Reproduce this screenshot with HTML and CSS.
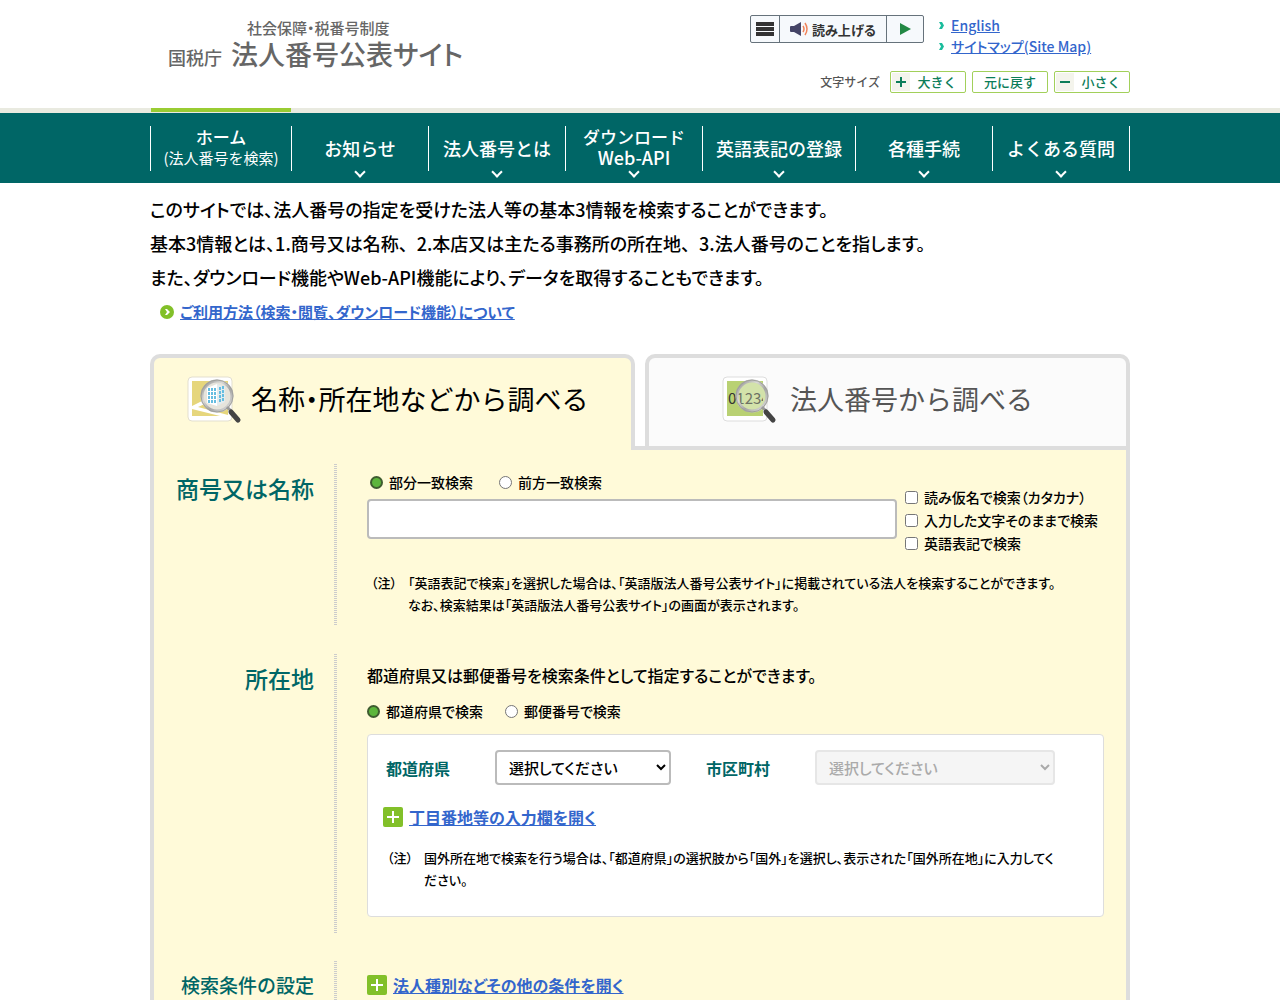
FILE: index.html
```html
<!DOCTYPE html>
<html lang="ja">
<head>
<meta charset="utf-8">
<meta name="viewport" content="width=device-width, initial-scale=1">
<title>国税庁法人番号公表サイト</title>
<link rel="stylesheet" href="styles.css">
</head>
<body>
<header class="site-header">
  <div class="container header-inner">
    <a class="logo" href="#">
      <span class="logo-sub">社会保障<span class="tight">・</span>税番号制度</span>
      <span class="logo-main"><span class="logo-agency">国税庁</span><span class="logo-title">法人番号公表サイト</span></span>
    </a>
    <div class="header-tools">
      <div class="tools-top">
        <div class="reader">
          <button type="button" class="reader-menu" aria-label="メニュー">
            <svg width="18" height="14" viewBox="0 0 18 14"><path d="M0 0h18v4H0zM0 5h18v4H0zM0 10h18v4H0z" fill="#333"/></svg>
          </button>
          <button type="button" class="reader-speak">
            <svg width="19" height="14" viewBox="0 0 19 14"><path d="M0 5q0-1 1-1h3l7-4v14l-7-4H1q-1 0-1-1z" fill="#446"/><path d="M13 4q2 3 0 6M15 1q4 6 0 12" fill="none" stroke="#f0845a" stroke-width="1.500"/></svg>
            読み上げる
          </button>
          <button type="button" class="reader-play" aria-label="再生">
            <svg width="11" height="12" viewBox="0 0 11 12"><path d="M0 0l11 6-11 6z" fill="#228844"/></svg>
          </button>
        </div>
        <ul class="sub-links">
          <li><svg width="5" height="7" viewBox="0 0 5 7"><path d="M0 0h3l2 3.500-2 3.500H0l2-3.500z" fill="#1abc9c"/></svg><a href="#">English</a></li>
          <li><svg width="5" height="7" viewBox="0 0 5 7"><path d="M0 0h3l2 3.500-2 3.500H0l2-3.500z" fill="#1abc9c"/></svg><a href="#">サイトマップ(Site Map)</a></li>
        </ul>
      </div>
      <div class="font-size">
        <span class="font-size-label">文字サイズ</span>
        <button type="button" class="size-btn"><span class="size-sign"><svg width="10" height="10" viewBox="0 0 10 10"><path d="M0 4h4V0h2v4h4v2H6v4H4V6H0z" fill="#0c7d59"/></svg></span><span class="size-text">大きく</span></button>
        <button type="button" class="size-btn"><span class="size-text">元に戻す</span></button>
        <button type="button" class="size-btn"><span class="size-sign"><svg width="10" height="10" viewBox="0 0 10 10"><path d="M0 4h10v2H0z" fill="#0c7d59"/></svg></span><span class="size-text">小さく</span></button>
      </div>
    </div>
  </div>
</header>
<nav class="global-nav">
  <ul class="container nav-list">
    <li class="current stacked"><a href="#"><span class="nav-two">ホーム</span><span class="nav-small">(法人番号を検索)</span></a></li>
    <li class="has-menu"><a href="#">お知らせ</a></li>
    <li class="has-menu"><a href="#">法人番号とは</a></li>
    <li class="has-menu stacked"><a href="#"><span class="nav-two">ダウンロード</span><span>Web-API</span></a></li>
    <li class="has-menu"><a href="#">英語表記の登録</a></li>
    <li class="has-menu"><a href="#">各種手続</a></li>
    <li class="has-menu"><a href="#">よくある質問</a></li>
  </ul>
</nav>
<main class="container">
  <div class="intro">
    <p>このサイトでは、法人番号の指定を受けた法人等の基本3情報を検索することができます。</p>
    <p>基本3情報とは、1.商号又は名称<span class="wide">、</span>2.本店又は主たる事務所の所在地<span class="wide">、</span>3.法人番号のことを指します。</p>
    <p>また、ダウンロード機能やWeb-API機能により、データを取得することもできます。</p>
    <div class="guide">
      <svg width="14" height="14" viewBox="0 0 14 14"><circle cx="7" cy="7" r="7" fill="#82c029"/><path d="M5 4h2l3 3-3 3H5l2-3z" fill="#fff"/></svg>
      <a href="#">ご利用方法（検索・閲覧、ダウンロード機能）について</a>
    </div>
  </div>
  <div class="tabs">
    <a class="tab tab-on" href="#">
      <svg width="56" height="50" viewBox="0 0 56 50">
        <defs>
          <linearGradient id="ring" x1="0" y1="0" x2="1" y2="1"><stop offset="0" stop-color="#8c8c8a"/><stop offset=".35" stop-color="#d8d8d6"/><stop offset=".6" stop-color="#a5a5a5"/><stop offset="1" stop-color="#e6e6e6"/></linearGradient>
          <clipPath id="card"><path d="M5 6h36v35H5z"/></clipPath>
        </defs>
        <rect x="1" y="2" width="44" height="44" rx="4" fill="#fff" stroke="#e3dfcf"/>
        <path d="M5 6h36v35H5z" fill="#e6d67c"/>
        <path d="M5 31l14-7 3 3-11 5 30 8v3L5 34z" fill="#fff"/>
        <circle cx="30" cy="21" r="15" fill="#e6e4dc"/>
        <path d="M20 13l10-4v22l-10-3z" fill="#fff"/><path d="M30 9l8 3v15l-8 4z" fill="#e4ecee"/>
        <path d="M22 13v15M25 13v15M28 13v15" stroke="#66bde0" stroke-width="2" stroke-dasharray="3 1" fill="none"/>
        <path d="M33 12v16M36 11v16" stroke="#66bde0" stroke-width="2" stroke-dasharray="3 1" fill="none"/>
        <circle cx="30" cy="21" r="15" fill="none" stroke="url(#ring)" stroke-width="3"/>
        <circle cx="30" cy="21" r="16" fill="none" stroke="#a0a09c"/>
        <path d="M40 32l4 4" stroke="#999" stroke-width="3"/><path d="M44 37l7 8" stroke="#444" stroke-width="5" stroke-linecap="round"/>
      </svg>
      <span>名称<span class="tight">・</span>所在地などから調べる</span>
    </a>
    <a class="tab tab-off" href="#">
      <svg width="56" height="50" viewBox="0 0 56 50">
        <rect x="1" y="2" width="44" height="44" rx="4" fill="#fff" stroke="#ddd"/>
        <path d="M5 6h36v35H5z" fill="#b9d173"/>
        <circle cx="30" cy="21" r="15" fill="#cfe09e"/>
        <text x="6" y="29" font-size="15" class="icon-digits" clip-path="url(#card)">01234</text>
        <circle cx="30" cy="21" r="15" fill="#dbe6bf" fill-opacity=".35" stroke="url(#ring)" stroke-width="3"/>
        <circle cx="30" cy="21" r="16" fill="none" stroke="#a0a09c"/>
        <path d="M40 32l4 4" stroke="#999" stroke-width="3"/><path d="M44 37l7 8" stroke="#444" stroke-width="5" stroke-linecap="round"/>
      </svg>
      <span>法人番号から調べる</span>
    </a>
  </div>
  <form class="panel">
    <section class="row">
      <h2>商号又は名称</h2>
      <div class="row-body name-body">
        <div class="name-grid">
          <div class="name-left">
            <div class="radios radios-name">
              <label><input type="radio" name="match" checked>部分一致検索</label>
              <label><input type="radio" name="match">前方一致検索</label>
            </div>
            <input class="text-box" type="text" aria-label="商号又は名称">
          </div>
          <div class="checks">
            <label><input type="checkbox">読み仮名で検索（カタカナ）</label>
            <label><input type="checkbox">入力した文字そのままで検索</label>
            <label><input type="checkbox">英語表記で検索</label>
          </div>
        </div>
        <div class="note"><span class="note-mark">（注）</span><p>「英語表記で検索」を選択した場合は、「英語版法人番号公表サイト」に掲載されている法人を検索することができます。<br>なお、検索結果は「英語版法人番号公表サイト」の画面が表示されます。</p></div>
      </div>
    </section>
    <section class="row">
      <h2>所在地</h2>
      <div class="row-body place-body">
        <p class="lead">都道府県又は郵便番号を検索条件として指定することができます。</p>
        <div class="radios radios-place">
          <label><input type="radio" name="place" checked>都道府県で検索</label>
          <label><input type="radio" name="place">郵便番号で検索</label>
        </div>
        <div class="box">
          <div class="selects">
            <label for="pref">都道府県</label>
            <select id="pref"><option>選択してください</option></select>
            <label for="city">市区町村</label>
            <select id="city" disabled><option>選択してください</option></select>
          </div>
          <div class="expand">
            <svg width="20" height="20" viewBox="0 0 20 20"><rect width="20" height="20" rx="2" fill="#82c029"/><path d="M4 9h5V4h2v5h5v2h-5v5H9v-5H4z" fill="#fff"/></svg>
            <a href="#">丁目番地等の入力欄を開く</a>
          </div>
          <div class="note"><span class="note-mark">（注）</span><p>国外所在地で検索を行う場合は、「都道府県」の選択肢から「国外」を選択し、表示された「国外所在地」に入力してく<br>ださい。</p></div>
        </div>
      </div>
    </section>
    <section class="row">
      <h2 class="long">検索条件の設定</h2>
      <div class="row-body more-body">
        <div class="expand">
          <svg width="20" height="20" viewBox="0 0 20 20"><rect width="20" height="20" rx="2" fill="#82c029"/><path d="M4 9h5V4h2v5h5v2h-5v5H9v-5H4z" fill="#fff"/></svg>
          <a href="#">法人種別などその他の条件を開く</a>
        </div>
      </div>
    </section>
  </form>
</main>
</body>
</html>
```
FILE: styles.css
```css
* { box-sizing: border-box; }
body {
  margin: 0;
  background: #fff;
  color: #000;
  font-family: "Noto Sans CJK JP", "Noto Sans", sans-serif;
  font-size: 14px;
  font-weight: 500;
  font-feature-settings: "palt";
}
ul { margin: 0; padding: 0; list-style: none; }
p, h2 { margin: 0; }
a { color: #3366cc; }
svg { display: block; flex: none; }
button, input, select { font: inherit; font-feature-settings: inherit; margin: 0; }
.container { width: 100%; max-width: 980px; margin: 0 auto; }
.tight { font-feature-settings: "palt"; }
.wide { font-feature-settings: normal; }

/* header */
.site-header { border-bottom: 5px solid #e9eae0; }
.header-inner { display: flex; justify-content: space-between; min-height: 108px; }
.logo { padding: 18px 0 0 18px; color: #666; text-decoration: none; }
.logo-sub { display: block; padding-left: 79px; font-size: 15px; line-height: 20px; font-feature-settings: normal; }
.logo-main { display: flex; align-items: baseline; gap: 9px; line-height: 32px; }
.logo-agency { font-size: 18px; }
.logo-title { font-size: 27px; }
.header-tools { flex: 0 0 380px; padding-top: 15px; }
.tools-top { display: flex; gap: 15px; }
.reader { display: flex; height: 28px; border: 1px solid #66727b; border-radius: 2px; background: #f6f9fc; }
.reader button { display: flex; align-items: center; justify-content: center; gap: 3px; padding: 0; border: 0; background: none; color: #333; font-size: 13px; }
.reader .reader-menu { width: 28px; }
.reader .reader-speak { width: 108px; border: solid #66727b; border-width: 0 1px; font-weight: 700; }
.reader .reader-play { width: 36px; }
.sub-links { line-height: 21px; }
.sub-links li { display: flex; align-items: center; gap: 7px; }
.font-size { display: flex; align-items: center; justify-content: flex-end; gap: 6px; margin-top: 14px; }
.font-size-label { margin-right: 4px; color: #555; font-size: 12px; line-height: 22px; font-feature-settings: normal; }
.size-btn { display: flex; align-items: center; width: 76px; height: 22px; padding: 1px; border: 1px solid #a2d05a; border-radius: 2px; background: #fff; color: #0c7d59; font-size: 13px; }
.size-sign { display: flex; align-items: center; justify-content: center; width: 18px; height: 18px; background: #f4f4ec; }
.size-text { flex: 1; text-align: center; line-height: 18px; font-feature-settings: normal; }

/* navigation */
.global-nav { background: #006666; }
.nav-list { display: grid; grid-template-columns: 141fr 137fr 137fr 137fr 153fr 137fr 138fr; min-height: 70px; padding: 13px 0 12px; }
.nav-list li { position: relative; border-left: 1px solid #fff; }
.nav-list li:last-child { border-right: 1px solid #fff; }
.nav-list a { display: flex; flex-direction: column; align-items: center; justify-content: center; height: 100%; color: #fff; font-size: 18px; line-height: 21px; text-decoration: none; white-space: nowrap; font-feature-settings: normal; }
.nav-list .stacked a { padding-bottom: 3px; }
.nav-two { font-size: 17px; }
.nav-small { font-size: 15px; font-weight: 400; }
.current::before { content: ""; position: absolute; top: -18px; left: 0; right: 0; height: 4px; background: #99cc33; }
.has-menu::after { content: ""; position: absolute; top: 42px; left: 50%; width: 6px; height: 6px; margin-left: -4px; border: solid #fff; border-width: 0 2px 2px 0; transform: rotate(45deg); }

/* introduction */
.intro { padding-top: 9px; font-size: 18px; line-height: 34px; }
.guide { display: flex; align-items: center; gap: 6px; margin-top: 1px; padding-left: 10px; font-size: 15px; font-weight: 700; }

/* tabs */
.tabs { display: grid; grid-template-columns: 1fr 1fr; gap: 10px; min-height: 96px; margin-top: 25px; box-shadow: inset 0 -4px 0 #ddd; }
.tab { display: flex; align-items: center; padding-bottom: 8px; border: 4px solid #ddd; border-radius: 10px 10px 0 0; color: #000; font-size: 27px; font-weight: 400; text-decoration: none; white-space: nowrap; font-feature-settings: normal; }
.tab svg { margin-top: 4px; }
.tab-on { gap: 8px; padding: 0 0 12px 33px; border-bottom: 0; background: #fffad9; }
.tab-off { gap: 12px; padding-left: 73px; background: #fbfbfb; color: #555; }
.icon-digits { fill: #333; }

/* search form */
.panel { display: grid; gap: 28px; padding-top: 14px; border: solid #ddd; border-width: 0 4px; background: #fffad9; }
.row { display: grid; grid-template-columns: 180px 3px 1fr; }
.row::before { content: ""; grid-column: 2; grid-row: 1; background: repeating-linear-gradient(#ccc 0 1px, transparent 1px 2px); }
.row h2 { grid-column: 1; grid-row: 1; padding: 8px 20px 0 0; color: #006666; font-size: 23px; font-weight: 500; line-height: 32px; text-align: right; font-feature-settings: normal; }
.row h2.long { font-size: 19px; }
.row-body { grid-column: 3; grid-row: 1; min-width: 0; padding: 0 22px 0 30px; }
.name-body { padding-top: 8px; padding-bottom: 10px; }
.name-grid { display: flex; gap: 8px; }
.name-left { flex: 0 1 530px; }
.radios { display: flex; line-height: 20px; }
.radios label, .checks label { display: flex; align-items: center; gap: 6px; white-space: nowrap; }
.radios-name { gap: 26px; padding-left: 3px; }
.radios-place { gap: 22px; }
input[type="radio"] { appearance: none; width: 13px; height: 13px; border: 1px solid #767676; border-radius: 50%; background: #fff; }
input[type="radio"]:checked { border: 2px solid #3e5c30; background: #5cb53c; }
input[type="checkbox"] { width: 13px; height: 13px; }
.text-box { display: block; width: 100%; height: 40px; margin-top: 7px; padding: 0 10px; border: 2px solid #bbb; border-radius: 4px; background: #fff; }
.checks { padding-top: 14px; line-height: 23px; }
.note { display: flex; padding-left: 4px; font-size: 13px; line-height: 22px; }
.note-mark { flex: none; width: 37px; }
.name-body .note { margin-top: 17px; }
.place-body { padding-top: 9px; padding-bottom: 16px; }
.lead { font-size: 16px; line-height: 24px; }
.radios-place { margin-top: 14px; }
.box { margin-top: 13px; padding: 15px 15px 25px; border: 1px solid #ddd; border-radius: 4px; background: #fff; }
.selects { display: grid; grid-template-columns: 109px 176px 144px 240px; align-items: center; padding-left: 3px; color: #006666; font-size: 16px; }
.selects label { font-weight: 700; }
.selects select { height: 35px; padding: 0 8px; border: 2px solid #bbb; border-radius: 4px; background: #fff; color: #000; font-size: 15px; }
.selects select:disabled { background: #f5f5f5; border-color: #e6e6e6; color: #aaa; opacity: 1; }
.selects label + select + label { padding-left: 35px; }
.expand { display: flex; align-items: center; gap: 6px; font-size: 16px; font-weight: 700; line-height: 24px; }
.box .expand { margin-top: 20px; }
.box .note { margin-top: 18px; }
.more-body { padding-top: 12px; }
```
